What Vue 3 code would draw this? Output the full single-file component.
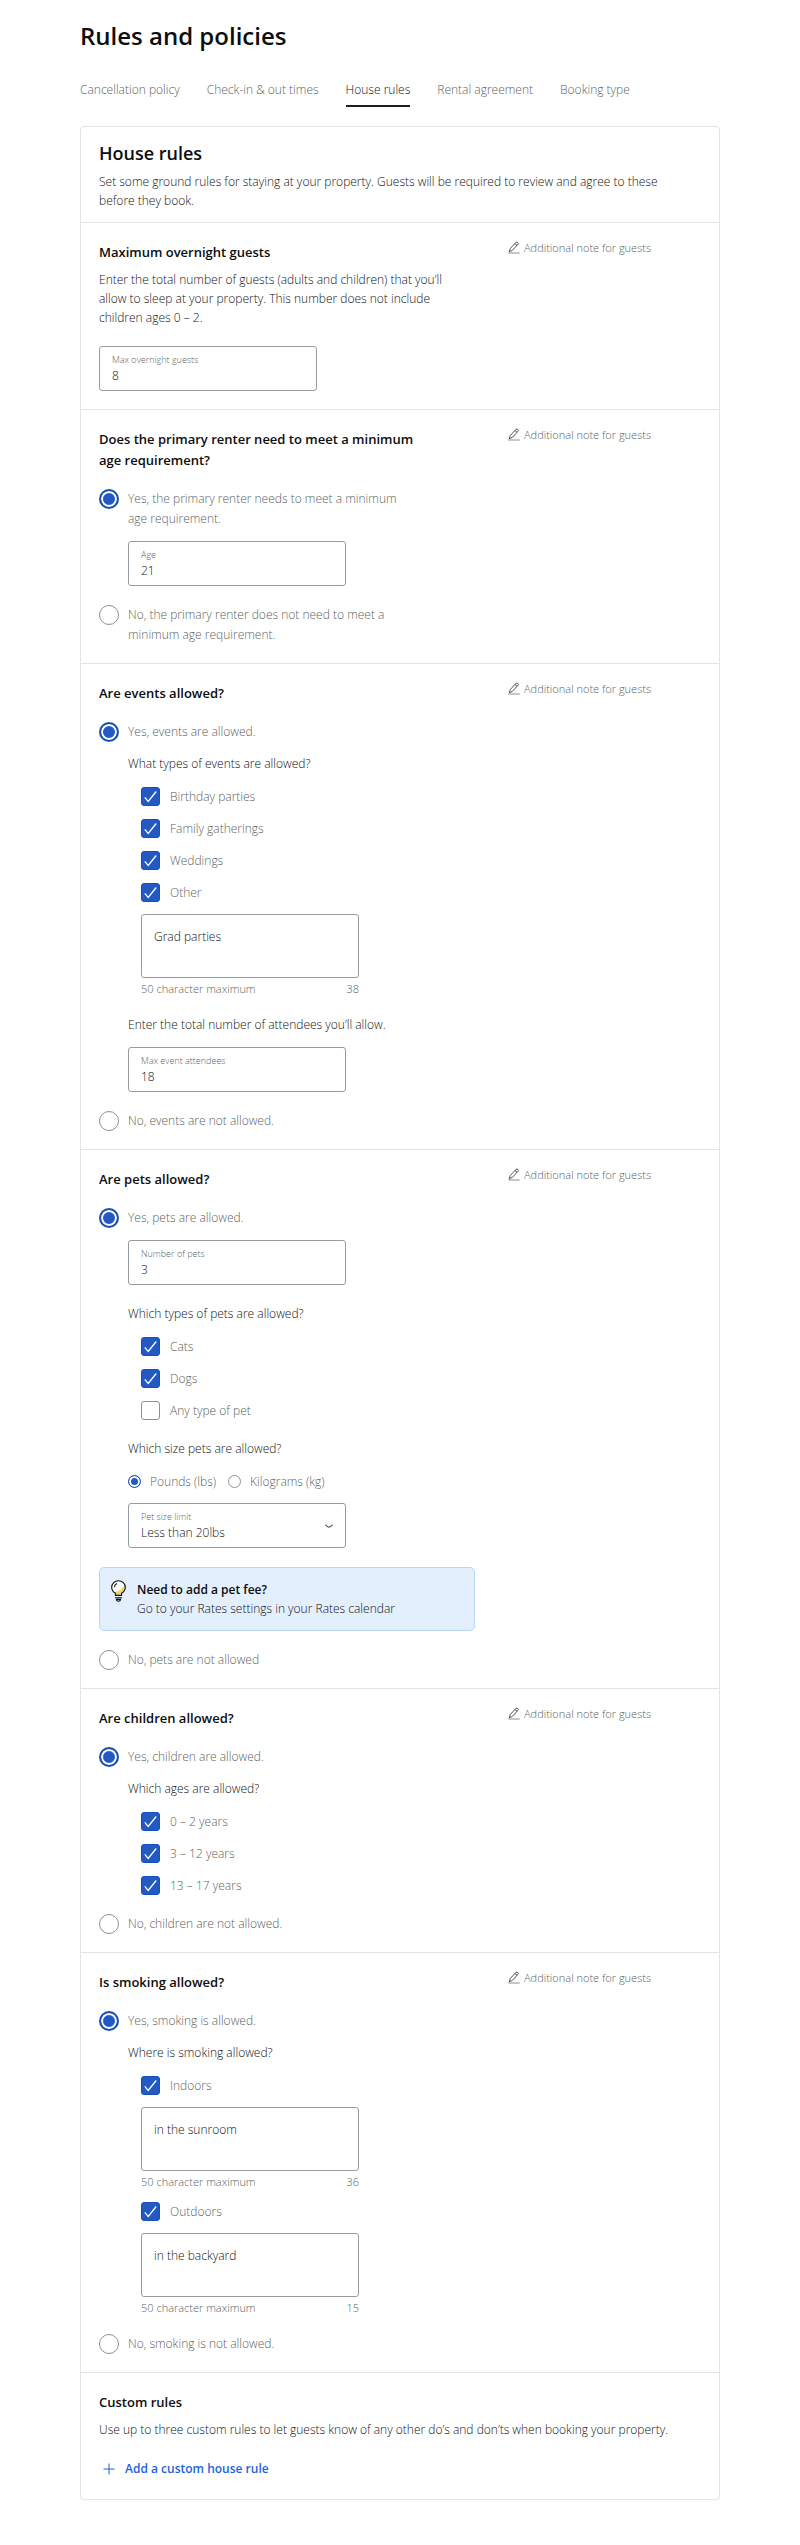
<script setup>
import { reactive } from 'vue'

const tabs = ['Cancellation policy', 'Check-in & out times', 'House rules', 'Rental agreement', 'Booking type']
const activeTab = 'House rules'

const form = reactive({
  maxGuests: '8',
  ageRule: 'yes',
  age: '21',
  events: 'yes',
  eventTypes: ['Birthday parties', 'Family gatherings', 'Weddings', 'Other'],
  otherEvent: 'Grad parties',
  attendees: '18',
  pets: 'yes',
  petCount: '3',
  petTypes: ['Cats', 'Dogs'],
  unit: 'lbs',
  petSize: 'Less than 20lbs',
  children: 'yes',
  ages: ['0 – 2 years', '3 – 12 years', '13 – 17 years'],
  smoking: 'yes',
  places: ['Indoors', 'Outdoors'],
  indoors: 'in the sunroom',
  outdoors: 'in the backyard'
})

const eventOptions = ['Birthday parties', 'Family gatherings', 'Weddings', 'Other']
const petOptions = ['Cats', 'Dogs', 'Any type of pet']
const ageOptions = ['0 – 2 years', '3 – 12 years', '13 – 17 years']
const places = [
  { name: 'Indoors', key: 'indoors', left: 36 },
  { name: 'Outdoors', key: 'outdoors', left: 15 }
]
</script>

<template>
  <svg class="defs" aria-hidden="true">
    <symbol id="pencil" viewBox="0 0 12 13">
      <path d="M1.2 10.8 2.4 7.4 8 1.3Q8.8.6 9.8 1.5 10.7 2.4 10 3.2L4.5 9.3ZM7 2.5l2 1.8" fill="none" stroke="#3c4043" stroke-width=".9" />
      <path d="M.3 12h11.4" fill="none" stroke="#8a8d90" />
    </symbol>
    <symbol id="tick" viewBox="0 0 19 19">
      <path d="M3.8 10.4 7.2 14.5 15.2 4.5" fill="none" stroke="#fff" stroke-width="1.3" />
    </symbol>
  </svg>

  <main class="page">
    <h1>Rules and policies</h1>
    <nav class="tabs">
      <a v-for="t in tabs" :key="t" href="#" :class="{ active: t === activeTab }">{{ t }}</a>
    </nav>

    <form class="card" @submit.prevent>
      <header class="intro">
        <h2>House rules</h2>
        <p>Set some ground rules for staying at your property. Guests will be required to review and agree to these before they book.</p>
      </header>

      <section class="rule">
        <div class="main">
          <h3>Maximum overnight guests</h3>
          <p class="lead">Enter the total number of guests (adults and children) that you’ll allow to sleep at your property. This number does not include children ages 0 – 2.</p>
          <label class="field far"><span>Max overnight guests</span><input v-model="form.maxGuests" type="text" /></label>
        </div>
        <button type="button" class="note"><svg><use href="#pencil" /></svg>Additional note for guests</button>
      </section>

      <section class="rule">
        <div class="main">
          <h3>Does the primary renter need to meet a minimum age requirement?</h3>
          <label class="option first"><input v-model="form.ageRule" type="radio" name="age" value="yes" /><span>Yes, the primary renter needs to meet a minimum age requirement.</span></label>
          <div class="nested">
            <label class="field"><span>Age</span><input v-model="form.age" type="text" /></label>
          </div>
          <label class="option far"><input v-model="form.ageRule" type="radio" name="age" value="no" /><span>No, the primary renter does not need to meet a minimum age requirement.</span></label>
        </div>
        <button type="button" class="note"><svg><use href="#pencil" /></svg>Additional note for guests</button>
      </section>

      <section class="rule">
        <div class="main">
          <h3>Are events allowed?</h3>
          <label class="option first"><input v-model="form.events" type="radio" name="events" value="yes" /><span>Yes, events are allowed.</span></label>
          <div class="nested">
            <p class="ask">What types of events are allowed?</p>
            <div class="choices">
              <label v-for="o in eventOptions" :key="o" class="check">
                <span class="box"><input v-model="form.eventTypes" type="checkbox" :value="o" /><svg><use href="#tick" /></svg></span>
                <span>{{ o }}</span>
              </label>
              <textarea v-model="form.otherEvent" aria-label="Other event types"></textarea>
              <div class="hint"><span>50 character maximum</span><span>38</span></div>
            </div>
            <p class="ask far">Enter the total number of attendees you’ll allow.</p>
            <label class="field"><span>Max event attendees</span><input v-model="form.attendees" type="text" /></label>
          </div>
          <label class="option far"><input v-model="form.events" type="radio" name="events" value="no" /><span>No, events are not allowed.</span></label>
        </div>
        <button type="button" class="note"><svg><use href="#pencil" /></svg>Additional note for guests</button>
      </section>

      <section class="rule">
        <div class="main">
          <h3>Are pets allowed?</h3>
          <label class="option first"><input v-model="form.pets" type="radio" name="pets" value="yes" /><span>Yes, pets are allowed.</span></label>
          <div class="nested">
            <label class="field"><span>Number of pets</span><input v-model="form.petCount" type="text" /></label>
            <p class="ask far">Which types of pets are allowed?</p>
            <div class="choices">
              <label v-for="o in petOptions" :key="o" class="check">
                <span class="box"><input v-model="form.petTypes" type="checkbox" :value="o" /><svg><use href="#tick" /></svg></span>
                <span>{{ o }}</span>
              </label>
            </div>
            <p class="ask far">Which size pets are allowed?</p>
            <div class="units">
              <label><input v-model="form.unit" type="radio" name="unit" value="lbs" /><span>Pounds (lbs)</span></label>
              <label><input v-model="form.unit" type="radio" name="unit" value="kg" /><span>Kilograms (kg)</span></label>
            </div>
            <div class="field pick">
              <div>
                <label for="pet-size">Pet size limit</label>
                <select id="pet-size" v-model="form.petSize">
                  <option>Less than 20lbs</option>
                </select>
              </div>
              <svg viewBox="0 0 8 4"><path d="M.4.6Q4 5.6 7.6.6" fill="none" stroke="#55585b" stroke-width="1.2" /></svg>
            </div>
          </div>
          <aside class="tip far">
            <svg viewBox="0 0 15 22">
              <path d="M4.4 15.4V13.2Q.7 11.2.7 7.2A6.8 6.5 0 0 1 14.3 7.2Q14.3 11.2 10.6 13.2V15.4Z" fill="#fff" />
              <path d="M13.4 4.4Q12 10.4 3.2 12.2L4.4 13.2V15.4H10.6V13.2Q14.3 11.2 14.3 7.2 14.3 5.6 13.4 4.4Z" fill="#f0d468" />
              <path d="M4.4 15.4V13.2Q.7 11.2.7 7.2A6.8 6.5 0 0 1 14.3 7.2Q14.3 11.2 10.6 13.2V15.4ZM3.4 7.2Q3.6 4.4 6 3.5M4 17.8h7M5.4 19.4Q5.6 21.2 7.5 21.2T9.6 19.4Z" fill="none" stroke="#111" stroke-width="1.1" />
            </svg>
            <div><strong>Need to add a pet fee?</strong><p>Go to your Rates settings in your Rates calendar</p></div>
          </aside>
          <label class="option far"><input v-model="form.pets" type="radio" name="pets" value="no" /><span>No, pets are not allowed</span></label>
        </div>
        <button type="button" class="note"><svg><use href="#pencil" /></svg>Additional note for guests</button>
      </section>

      <section class="rule">
        <div class="main">
          <h3>Are children allowed?</h3>
          <label class="option first"><input v-model="form.children" type="radio" name="children" value="yes" /><span>Yes, children are allowed.</span></label>
          <div class="nested">
            <p class="ask">Which ages are allowed?</p>
            <div class="choices">
              <label v-for="o in ageOptions" :key="o" class="check">
                <span class="box"><input v-model="form.ages" type="checkbox" :value="o" /><svg><use href="#tick" /></svg></span>
                <span>{{ o }}</span>
              </label>
            </div>
          </div>
          <label class="option far"><input v-model="form.children" type="radio" name="children" value="no" /><span>No, children are not allowed.</span></label>
        </div>
        <button type="button" class="note"><svg><use href="#pencil" /></svg>Additional note for guests</button>
      </section>

      <section class="rule">
        <div class="main">
          <h3>Is smoking allowed?</h3>
          <label class="option first"><input v-model="form.smoking" type="radio" name="smoking" value="yes" /><span>Yes, smoking is allowed.</span></label>
          <div class="nested">
            <p class="ask">Where is smoking allowed?</p>
            <div v-for="p in places" :key="p.key" class="choices">
              <label class="check">
                <span class="box"><input v-model="form.places" type="checkbox" :value="p.name" /><svg><use href="#tick" /></svg></span>
                <span>{{ p.name }}</span>
              </label>
              <textarea v-model="form[p.key]" :aria-label="p.name + ' details'"></textarea>
              <div class="hint"><span>50 character maximum</span><span>{{ p.left }}</span></div>
            </div>
          </div>
          <label class="option far"><input v-model="form.smoking" type="radio" name="smoking" value="no" /><span>No, smoking is not allowed.</span></label>
        </div>
        <button type="button" class="note"><svg><use href="#pencil" /></svg>Additional note for guests</button>
      </section>

      <section class="custom">
        <h3>Custom rules</h3>
        <p class="lead">Use up to three custom rules to let guests know of any other do’s and don’ts when booking your property.</p>
        <button type="button" class="add">
          <svg viewBox="0 0 12 12"><path d="M6 .5v11M.5 6h11" stroke="#1d63dc" stroke-width="1" /></svg>Add a custom house rule
        </button>
      </section>
    </form>
  </main>
</template>

<style>
body {
  background: #fff;
}
</style>

<style scoped>
.defs {
  display: none;
}
.page {
  padding: 18px 80px 44px;
  font: 300 12px/19px "Open Sans", "Noto Sans", sans-serif;
  color: #101214;
}
h1, h2, h3, p {
  margin: 0;
}
h1, h2, h3, strong {
  font-weight: 600;
  color: #0c0d0e;
}
h1 {
  font-size: 24px;
  line-height: 36px;
}
h2 {
  font-size: 18px;
  line-height: 28px;
}
h3 {
  max-width: 330px;
  font-size: 13px;
  line-height: 21px;
}
input, textarea, select, button {
  margin: 0;
  font: inherit;
  color: inherit;
  box-sizing: border-box;
}
button {
  padding: 0;
  border: 0;
  background: none;
  cursor: pointer;
}

.tabs {
  display: flex;
  gap: 27px;
  margin-top: 26px;
}
.tabs a {
  padding-bottom: 6px;
  border-bottom: 2px solid transparent;
  line-height: 19px;
  color: #5c5f62;
  text-decoration: none;
}
.tabs a.active {
  border-color: #1c1e20;
  color: #101214;
}

.card {
  margin-top: 19px;
  border: 1px solid #e4e4e5;
  border-radius: 4px;
}
.intro {
  padding: 12px 18px 12px;
}
.intro p {
  max-width: 580px;
  margin-top: 5px;
}
.rule, .custom {
  padding: 19px 18px 18px;
  border-top: 1px solid #e4e4e5;
}
.rule {
  display: grid;
  grid-template-columns: minmax(0, 376px) minmax(0, 1fr);
  column-gap: 33px;
  align-items: start;
}
.main {
  display: flex;
  flex-direction: column;
}
.lead {
  margin-top: 7px;
}
.rule .lead {
  max-width: 360px;
}
.note {
  display: flex;
  align-items: center;
  gap: 4px;
  margin-top: -4px;
  font-size: 11px;
  color: #5c5f62;
}
.note svg {
  width: 12px;
  height: 13px;
}

.option {
  display: flex;
  align-items: flex-start;
  gap: 9px;
  margin-top: 12px;
  max-width: 310px;
  line-height: 20px;
  color: #5c5f62;
}
.option.first {
  margin-top: 18px;
}
.far.far {
  margin-top: 19px;
}
input[type="radio"] {
  flex: none;
  appearance: none;
  width: 20px;
  height: 20px;
  border: 1px solid #8e9194;
  border-radius: 50%;
  background: #fff;
}
input[type="radio"]:checked {
  border: 2px solid #1a50b8;
  background: #2259c2;
  box-shadow: inset 0 0 0 2px #fff;
}
.nested {
  display: flex;
  flex-direction: column;
  padding-left: 29px;
}
.ask {
  margin-top: 12px;
  line-height: 20px;
}
.choices {
  padding-left: 13px;
}
.check {
  display: flex;
  align-items: center;
  gap: 10px;
  height: 20px;
  margin-top: 12px;
  color: #5c5f62;
}
.box {
  display: grid;
  width: 19px;
  height: 19px;
}
.box > * {
  grid-area: 1 / 1;
  width: 19px;
  height: 19px;
}
.box svg {
  visibility: hidden;
  pointer-events: none;
}
.box input {
  appearance: none;
  border: 1px solid #8e9194;
  border-radius: 3px;
}
.box input:checked {
  border-color: #1a50b8;
  background: #2259c2;
}
.box input:checked + svg {
  visibility: visible;
}

.field {
  display: flex;
  flex-direction: column;
  box-sizing: border-box;
  width: 100%;
  max-width: 218px;
  margin-top: 12px;
  padding: 6px 12px 5px;
  border: 1px solid #999c9e;
  border-radius: 3px;
}
.field > span, .field label {
  font-size: 9px;
  line-height: 14px;
  color: #5c5f62;
}
.field > input, select {
  width: 100%;
  height: 18px;
  padding: 0;
  border: 0;
  outline: 0;
  background: none;
  line-height: 18px;
}
.pick {
  flex-direction: row;
  align-items: center;
}
.pick > div {
  display: flex;
  flex: 1;
  flex-direction: column;
}
.pick svg {
  width: 8px;
  height: 4px;
}
select {
  appearance: none;
}
textarea {
  display: block;
  width: 100%;
  max-width: 218px;
  height: 64px;
  margin-top: 12px;
  padding: 12px;
  border: 1px solid #999c9e;
  border-radius: 3px;
  resize: none;
}
.hint {
  display: flex;
  justify-content: space-between;
  max-width: 218px;
  margin-top: 3px;
  font-size: 11px;
  line-height: 15px;
  color: #5c5f62;
}
.units {
  display: flex;
  gap: 12px;
  height: 20px;
  margin-top: 12px;
  color: #5c5f62;
}
.units label {
  display: flex;
  align-items: center;
  gap: 9px;
}
.units input[type="radio"] {
  width: 13px;
  height: 13px;
}
.units input[type="radio"]:checked {
  border-width: 1px;
}

.tip {
  display: flex;
  gap: 11px;
  padding: 12px 12px 12px 11px;
  border: 1px solid #b9d6fa;
  border-radius: 5px;
  background: #e3effd;
}
.tip svg {
  flex: none;
  width: 15px;
  height: 22px;
}

.custom {
  padding-bottom: 20px;
}
.add {
  display: flex;
  align-items: center;
  gap: 10px;
  margin-top: 20px;
  padding-left: 4px;
  line-height: 20px;
  font-weight: 600;
  color: #1d63dc;
}
.add svg {
  width: 12px;
  height: 12px;
}
</style>
